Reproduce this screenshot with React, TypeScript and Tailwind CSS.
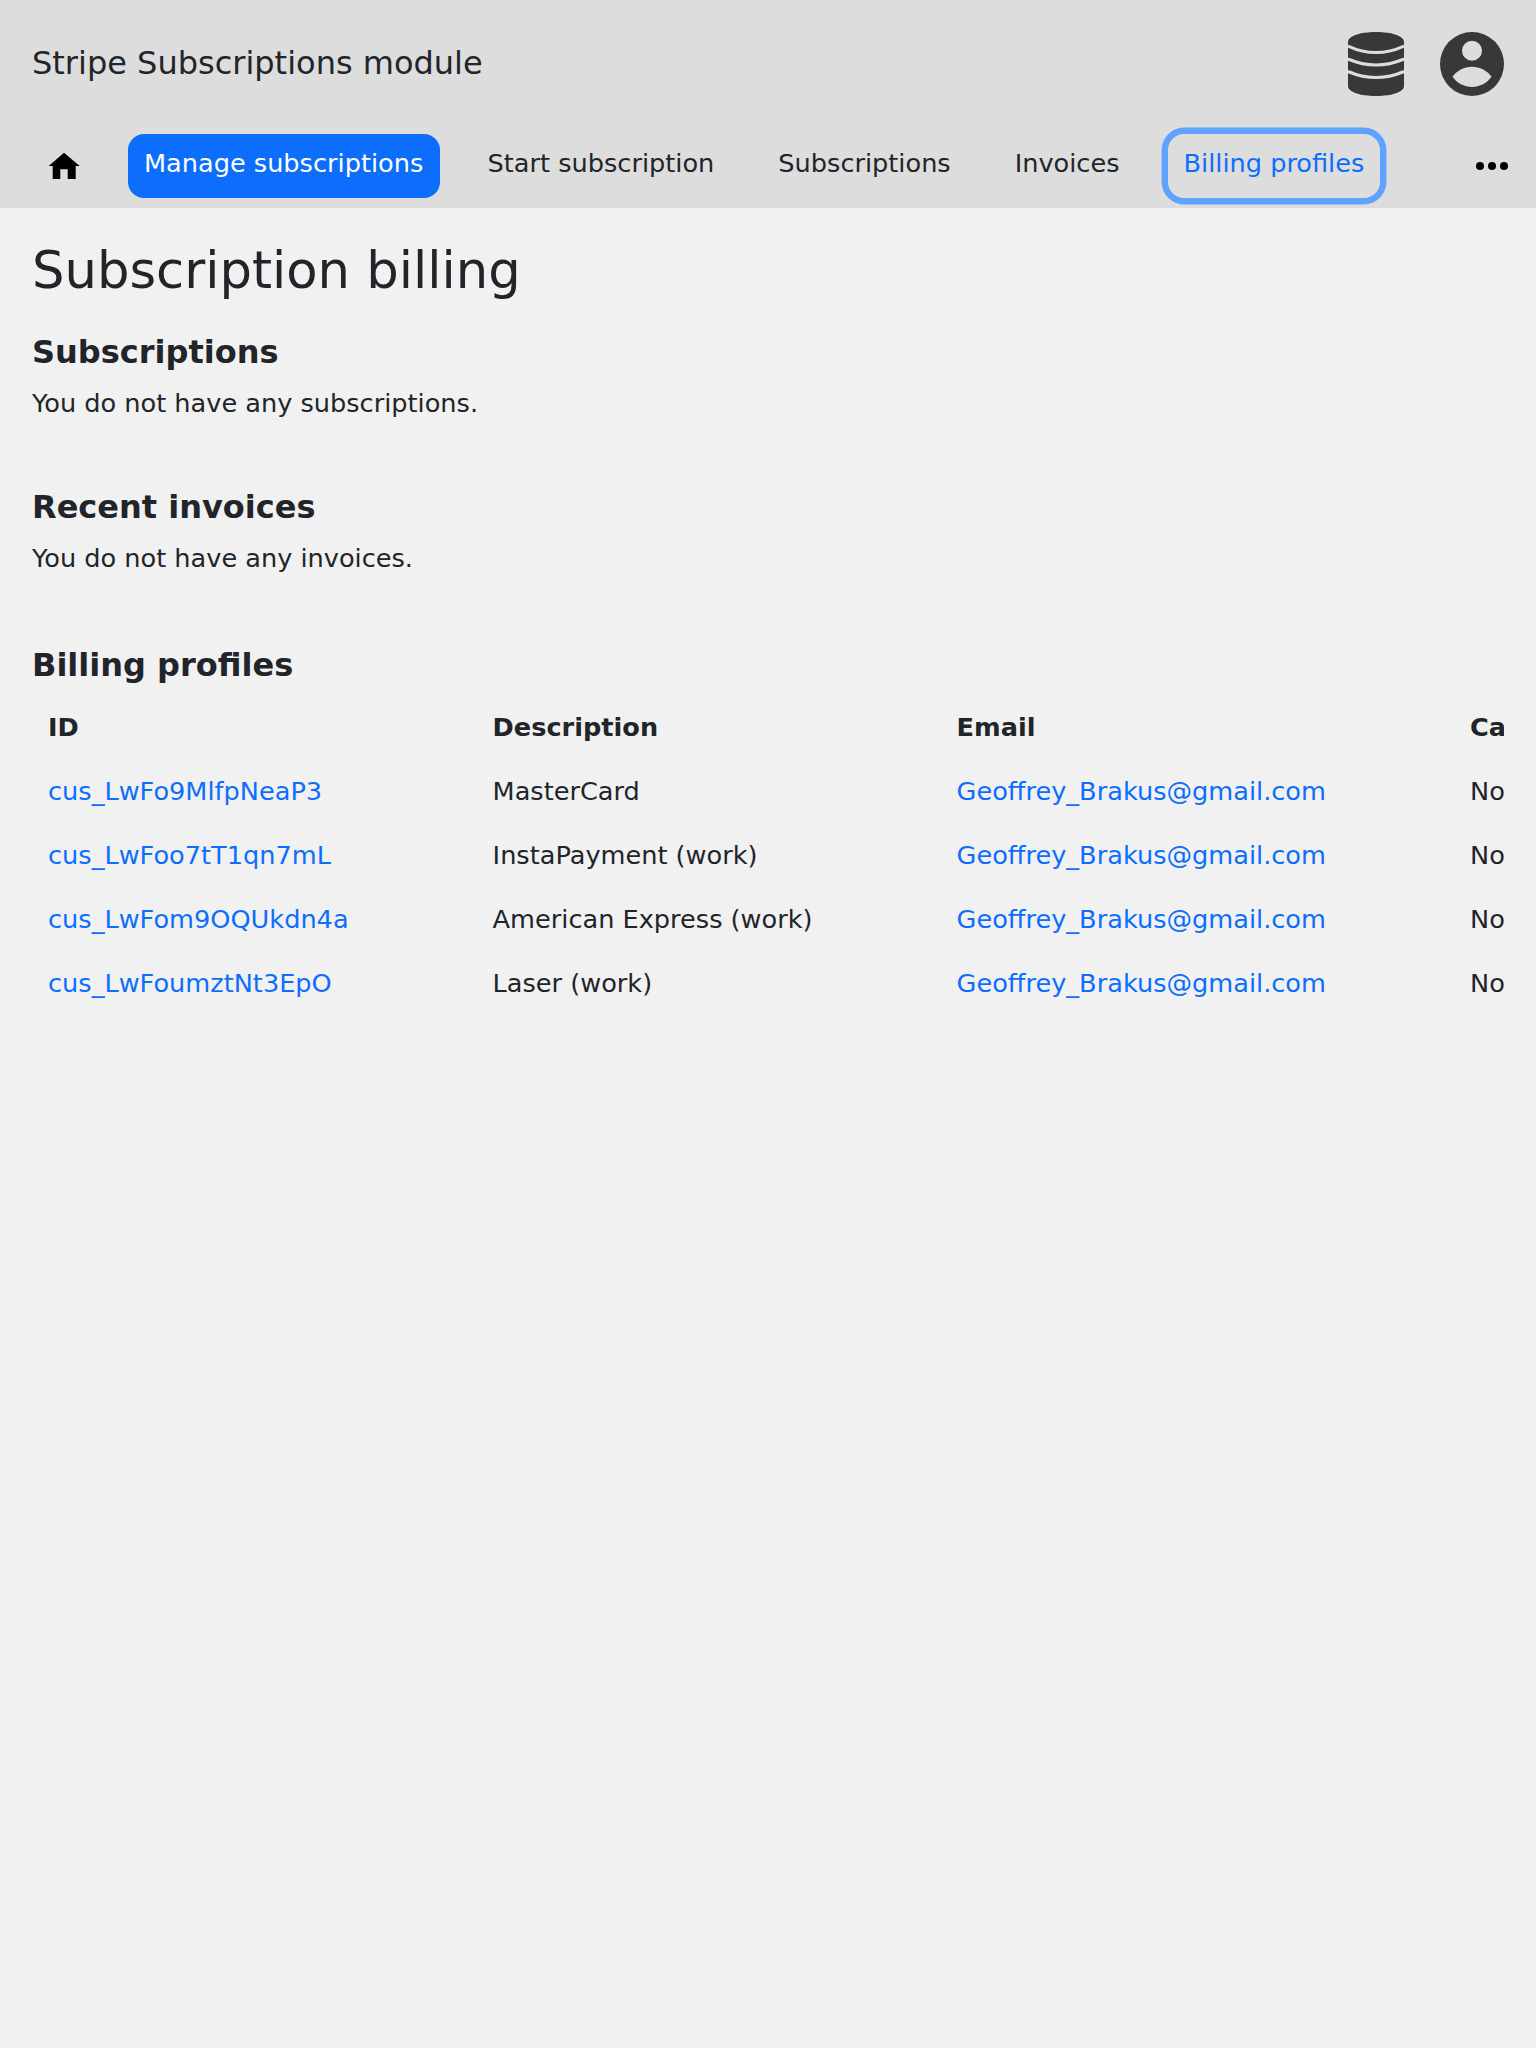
const profiles = [
  { id: "cus_LwFo9MlfpNeaP3", description: "MasterCard" },
  { id: "cus_LwFoo7tT1qn7mL", description: "InstaPayment (work)" },
  { id: "cus_LwFom9OQUkdn4a", description: "American Express (work)" },
  { id: "cus_LwFoumztNt3EpO", description: "Laser (work)" },
];

function HomeIcon() {
  return (
    <svg viewBox="0 0 32 32" className="block h-[32px] w-[32px]" fill="#000">
      <path d="M16 2.7 31.7 16H27.7V29H19.7V19.3H12.3V29H4.7V16H0.7Z" />
    </svg>
  );
}

function DatabaseIcon() {
  return (
    <svg viewBox="0 0 56 64" className="h-[64px] w-[56px]">
      <path
        d="M0 10C0 4 12 0 28 0S56 4 56 10V54C56 60 44 64 28 64S0 60 0 54Z"
        fill="#383838"
      />
      <g fill="none" stroke="#dddddd" strokeWidth="3">
        <path d="M0 14Q28 27 56 14" />
        <path d="M0 27Q28 39 56 27" />
        <path d="M0 39.5Q28 51.5 56 39.5" />
      </g>
    </svg>
  );
}

function UserIcon() {
  return (
    <svg viewBox="0 0 64 64" className="h-[64px] w-[64px]">
      <circle cx="32" cy="32" r="32" fill="#383838" />
      <circle cx="32" cy="18.8" r="10" fill="#dddddd" />
      <path
        d="M12.5 44.8C17 38.5 24 34.7 32 34.7S47 38.5 51.5 44.8C47 51 40 55 32 55S17 51 12.5 44.8Z"
        fill="#dddddd"
      />
    </svg>
  );
}

function DotsIcon() {
  return (
    <svg viewBox="0 0 32 8" className="h-[8px] w-[32px]" fill="#000">
      <circle cx="4" cy="4" r="4" />
      <circle cx="16" cy="4" r="4" />
      <circle cx="28" cy="4" r="4" />
    </svg>
  );
}

export default function App() {
  return (
    <div className="min-h-[2048px] bg-[#f1f1f1] text-[25.6px] leading-[38.4px] text-[#212529] font-['DejaVu_Sans',sans-serif]">
      <header className="h-[208px] bg-[#dddddd] px-[32px]">
        <div className="flex h-[128px] items-center justify-between">
          <div className="pb-[2px] text-[32px]">Stripe Subscriptions module</div>
          <div className="flex items-center gap-[36px]">
            <DatabaseIcon />
            <UserIcon />
          </div>
        </div>
        <nav className="mt-[6px] flex h-[64px] items-center justify-between">
          <div className="flex items-center gap-[32px]">
            <a className="px-[16px]"><HomeIcon /></a>
            <a className="rounded-[16px] bg-[#0d6efd] pt-[10px] pb-[15.6px] pr-[16.3px] pl-[16px] text-white">Manage subscriptions</a>
            <a className="pt-[10px] pb-[15.6px] px-[16px]">Start subscription</a>
            <a className="pt-[10px] pb-[15.6px] px-[16px]">Subscriptions</a>
            <a className="pt-[10px] pb-[15.6px] px-[16px]">Invoices</a>
            <a className="rounded-[16px] pt-[10px] pb-[15.6px] px-[16px] text-[#0d6efd] ring-[6.4px] ring-[#5fa2ff]">Billing profiles</a>
          </div>
          <div className="-mr-[4px]"><DotsIcon /></div>
        </nav>
      </header>
      <main className="px-[32px] pt-[32px]">
        <h1 className="mb-[31.2px] text-[51.2px] leading-[1.2]">Subscription billing</h1>
        <h2 className="mb-[12.8px] text-[32px] font-bold leading-[1.2]">Subscriptions</h2>
        <p className="mb-[65.4px]">You do not have any subscriptions.</p>
        <h2 className="mb-[12.8px] text-[32px] font-bold leading-[1.2]">Recent invoices</h2>
        <p className="mb-[69px]">You do not have any invoices.</p>
        <h2 className="mb-[10.6px] text-[32px] font-bold leading-[1.2]">Billing profiles</h2>
        <div className="overflow-hidden">
          <table className="w-[1600px] table-fixed text-left">
            <colgroup>
              <col className="w-[444.6px]" />
              <col className="w-[464px]" />
              <col className="w-[513.4px]" />
              <col />
            </colgroup>
            <thead>
              <tr>
                <th className="p-[12.8px] pl-[16px] font-bold">ID</th>
                <th className="p-[12.8px] pl-[16px] font-bold">Description</th>
                <th className="p-[12.8px] pl-[16px] font-bold">Email</th>
                <th className="p-[12.8px] pl-[16px] font-bold">Cancelled</th>
              </tr>
            </thead>
            <tbody>
              {profiles.map((profile) => (
                <tr key={profile.id}>
                  <td className="p-[12.8px] pl-[16px] text-[#0d6efd]">{profile.id}</td>
                  <td className="p-[12.8px] pl-[16px]">{profile.description}</td>
                  <td className="p-[12.8px] pl-[16px] text-[#0d6efd]">Geoffrey_Brakus@gmail.com</td>
                  <td className="p-[12.8px] pl-[16px]">No</td>
                </tr>
              ))}
            </tbody>
          </table>
        </div>
      </main>
    </div>
  );
}
